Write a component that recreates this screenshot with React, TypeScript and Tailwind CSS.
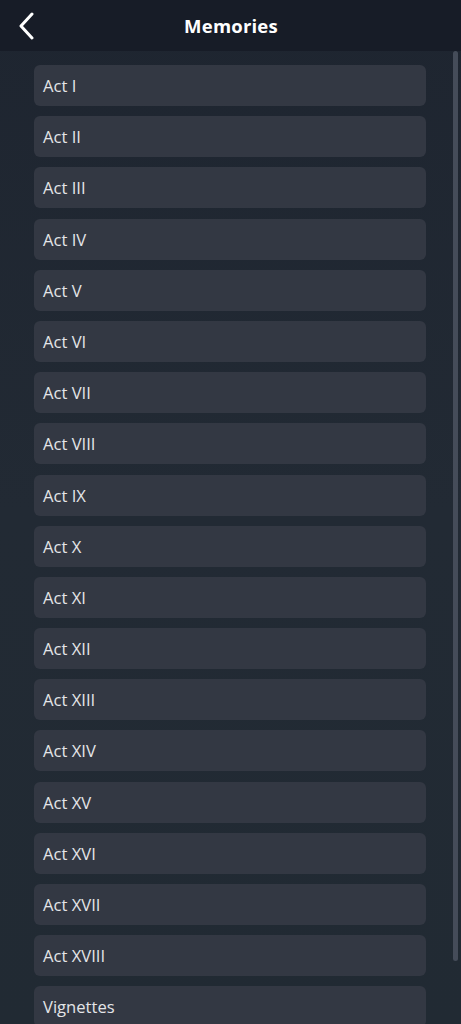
import React from "react";

const items = [
  "Act I","Act II","Act III","Act IV","Act V","Act VI","Act VII","Act VIII","Act IX","Act X",
  "Act XI","Act XII","Act XIII","Act XIV","Act XV","Act XVI","Act XVII","Act XVIII","Vignettes",
];

export default function App() {
  return (
    <div className="relative w-[461px] h-[1024px] overflow-hidden bg-gradient-to-b from-[#1e2530] via-[#222a34] to-[#212a33]" style={{ fontFamily: '"Open Sans", sans-serif' }}>
      <header className="h-[51px] bg-[#171c27] flex items-center justify-center relative">
        <svg className="absolute left-[16px] top-[12px]" width="20" height="28" viewBox="0 0 20 28" fill="none">
          <path d="M16 2 L5 14 L16 26" stroke="#ffffff" strokeWidth="3" strokeLinecap="round" strokeLinejoin="round" />
        </svg>
        <h1 className="text-[18.5px] font-bold text-white tracking-[0.2px] ml-[1px] mt-[1px]">Memories</h1>
      </header>
      <div className="flex flex-col gap-[10.2px] pl-[34px] pr-[35px] pt-[14px]">
        {items.map((t) => (
          <div key={t} className="h-[41px] shrink-0 rounded-[6px] bg-[#333843] flex items-center pl-[9px] pt-[2px] text-[16.6px] text-[#e4e5e8]">
            {t}
          </div>
        ))}
      </div>
      <div className="absolute left-[453px] top-[51px] w-[5px] h-[910px] rounded-[3px] bg-[#454c59]" />
    </div>
  );
}
